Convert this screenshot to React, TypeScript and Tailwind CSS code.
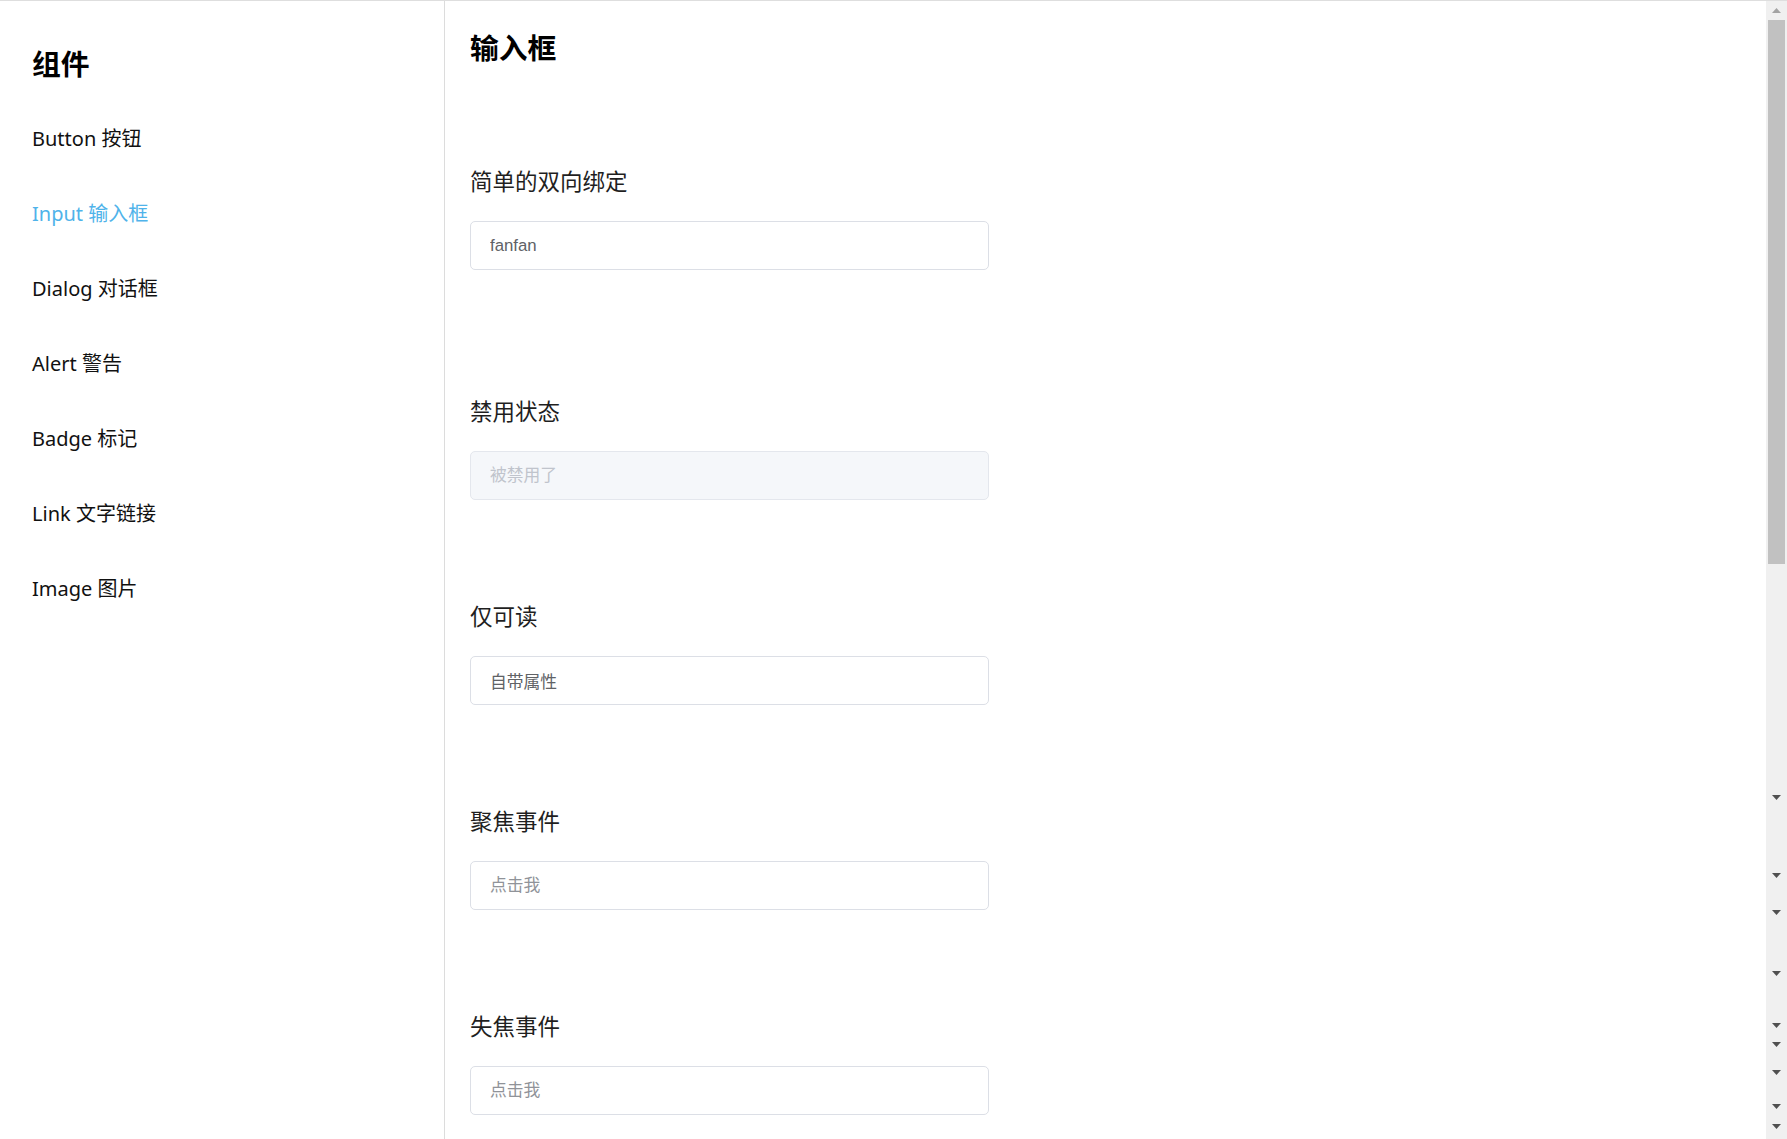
const navItems = [
  { label: 'Button 按钮' },
  { label: 'Input 输入框', active: true },
  { label: 'Dialog 对话框' },
  { label: 'Alert 警告' },
  { label: 'Badge 标记' },
  { label: 'Link 文字链接' },
  { label: 'Image 图片' },
];

const fontUi = 'font-["Noto_Sans","Noto_Sans_CJK_SC",sans-serif]';
const fontInput = 'font-["Liberation_Sans","Noto_Sans_CJK_SC",sans-serif]';

type FieldProps = {
  title: string;
  value?: string;
  placeholder?: string;
  disabled?: boolean;
  gap: string;
};

const Field = ({ title, value, placeholder, disabled, gap }: FieldProps) => (
  <section className={gap}>
    <h3 className="text-[22.5px] leading-[28px] font-normal text-[#1f1f1f] mb-[25px]">{title}</h3>
    <input
      readOnly
      disabled={disabled}
      defaultValue={value}
      placeholder={placeholder}
      className={`${fontInput} w-[519px] h-[49px] px-[19px] text-[16.8px] rounded-[5px] border outline-none ${
        disabled
          ? 'bg-[#f5f7fa] border-[#e4e7ed] text-[#c0c4cc] placeholder:text-[#c0c4cc]'
          : 'bg-white border-[#dcdfe6] text-[#606266] placeholder:text-[#909399]'
      }`}
    />
  </section>
);

// browser scrollbar, arrow glyphs included as seen in the capture
const downArrows = [797, 875, 912, 973, 1025, 1044, 1072, 1106, 1126];

const Scrollbar = () => (
  <div className="relative w-[21px] shrink-0 bg-[#f0f0f0] flex flex-col items-center">
    <svg width="9" height="5" viewBox="0 0 9 5" className="mt-[7px] fill-[#a3a3a3]">
      <path d="M4.5 0L9 5H0z" />
    </svg>
    <div className="mt-[7px] w-[17px] h-[544px] bg-[#c1c1c1]" />
    {downArrows.map((y) => (
      <svg
        key={y}
        width="9"
        height="5"
        viewBox="0 0 9 5"
        className="absolute left-[6px] fill-[#505050]"
        style={{ top: y - 3 }}
      >
        <path d="M0 0H9L4.5 5z" />
      </svg>
    ))}
  </div>
);

export default function App() {
  return (
    <div className={`${fontUi} h-[1139px] w-full overflow-hidden bg-white border-t border-[#dedede] flex`}>
      {/* Sidebar */}
      <aside className="w-[445px] shrink-0 border-r border-[#dcdcdc] pl-[32px]">
        <h2 className="mt-[43px] text-[28.8px] leading-[40px] font-bold text-black">组件</h2>
        <nav className="mt-[17px] flex flex-col">
          {navItems.map((item) => (
            <a
              key={item.label}
              className={`h-[75px] flex items-center text-[20px] cursor-pointer ${
                item.active ? 'text-[#4fb3ea]' : 'text-[#111]'
              }`}
            >
              {item.label}
            </a>
          ))}
        </nav>
      </aside>

      {/* Content */}
      <main className="flex-1 pl-[25px]">
        <h1 className="mt-[27px] text-[28.8px] leading-[40px] font-bold text-black">输入框</h1>
        <Field title="简单的双向绑定" value="fanfan" gap="mt-[100px]" />
        <Field title="禁用状态" placeholder="被禁用了" disabled gap="mt-[128px]" />
        <Field title="仅可读" value="自带属性" gap="mt-[103px]" />
        <Field title="聚焦事件" placeholder="点击我" gap="mt-[103px]" />
        <Field title="失焦事件" placeholder="点击我" gap="mt-[103px]" />
      </main>

      <Scrollbar />
    </div>
  );
}
